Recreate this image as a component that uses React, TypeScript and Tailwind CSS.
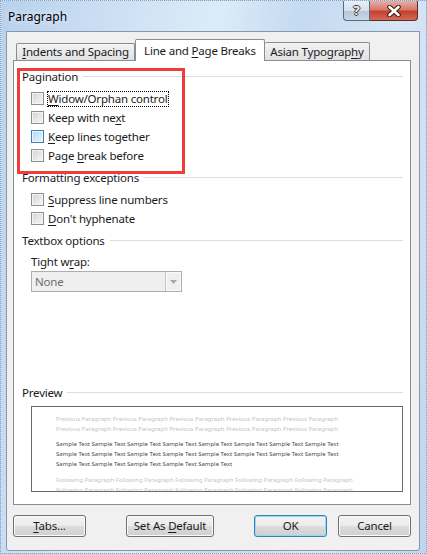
import React from "react";

const U = ({ children }: { children: React.ReactNode }) => (
  <span className="underline decoration-1 underline-offset-[2px]">{children}</span>
);

function Checkbox({ hot }: { hot?: boolean }) {
  return (
    <div
      className={`w-[13px] h-[13px] shrink-0 border p-px bg-[#f4f4f4] ${
        hot ? "border-[#3c7fb1] bg-[#def1fd]" : "border-[#8e8f8f]"
      }`}
    >
      <div
        className={`w-full h-full ${
          hot
            ? "bg-linear-to-br from-[#b0daf7] to-[#e8f5fe]"
            : "bg-linear-to-br from-[#d6d6d6] to-[#f4f4f4]"
        }`}
      />
    </div>
  );
}

function CheckRow({
  children,
  hot,
  focus,
}: {
  children: React.ReactNode;
  hot?: boolean;
  focus?: boolean;
}) {
  return (
    <div className="flex items-center h-[19px] pl-[9px]">
      <Checkbox hot={hot} />
      <span
        className={`ml-[3px] pr-px leading-[14px] border whitespace-nowrap ${
          focus ? "border-dotted border-black" : "border-transparent"
        }`}
      >
        {children}
      </span>
    </div>
  );
}

function GroupHeader({ title, className = "" }: { title: string; className?: string }) {
  return (
    <div className={`flex items-center h-[16px] ${className}`}>
      <span className="text-[#1a1a1a] whitespace-nowrap">{title}</span>
      <div className="flex-1 h-px bg-[#d5dfe6] ml-[5px] mt-[-2px]" />
    </div>
  );
}

function Button({
  children,
  className = "",
  primary,
}: {
  children: React.ReactNode;
  className?: string;
  primary?: boolean;
}) {
  return (
    <div
      className={`h-[22px] rounded-[3px] border flex items-center justify-center text-[#1a1a1a] bg-[linear-gradient(#f2f2f2_0%,#ebebeb_50%,#dddddd_50%,#cfcfcf_100%)] ${
        primary
          ? "border-[#3c7fb1] shadow-[inset_0_0_0_1px_#8fdcf8]"
          : "border-[#707070] shadow-[inset_0_0_0_1px_#fbfbfb]"
      } ${className}`}
    >
      {children}
    </div>
  );
}

const prevLine = "Previous Paragraph Previous Paragraph Previous Paragraph Previous Paragraph Previous Paragraph";
const sample8 = "Sample Text Sample Text Sample Text Sample Text Sample Text Sample Text Sample Text Sample Text";
const sample5 = "Sample Text Sample Text Sample Text Sample Text Sample Text";
const follLine = "Following Paragraph Following Paragraph Following Paragraph Following Paragraph Following Paragraph";

export default function App() {
  return (
    <div className="relative w-[427px] h-[554px] overflow-hidden border border-dotted border-[#8aa0bd] bg-[linear-gradient(100deg,#b8d1ec_0%,#cfe2f5_25%,#dcebf8_42%,#c4daf0_58%,#d6e6f6_78%,#bfd5ed_100%)] font-['Noto_Sans',sans-serif] text-[11.5px] tracking-[-0.2px] flex flex-col">
      {/* Title bar */}
      <div className="h-[30px] flex justify-between pl-[7px] pr-[8px] shrink-0">
        <span className="self-center mt-[1px] text-[12px] tracking-normal text-black [text-shadow:0_0_6px_#ffffff]">
          Paragraph
        </span>
        <div className="flex self-start h-[20px]">
          <div className="w-[27px] h-[20px] rounded-bl-[4px] border border-t-0 border-[#5b6b7e] bg-[linear-gradient(#e9f0f7_0%,#d3dfeb_50%,#b7c7d9_51%,#c9d7e6_100%)] flex items-center justify-center">
            <span className="text-[13px] font-bold leading-none text-[#f4f4f4] [text-shadow:1px_0_#3a3a3a,-1px_0_#3a3a3a,0_1px_#3a3a3a,0_-1px_#3a3a3a]">
              ?
            </span>
          </div>
          <div className="w-[48px] h-[20px] rounded-br-[4px] border border-t-0 border-l-0 border-[#5e2a24] bg-[linear-gradient(#e9aea4_0%,#d8796b_45%,#c2402f_55%,#d56a59_100%)] flex items-center justify-center">
            <svg width="16" height="12" viewBox="0 0 16 12">
              <path d="M3.5 2 L12.5 10 M12.5 2 L3.5 10" stroke="#3a1b16" strokeWidth="4.6" strokeLinecap="round" fill="none" />
              <path d="M3.5 2 L12.5 10 M12.5 2 L3.5 10" stroke="#ffffff" strokeWidth="2.6" strokeLinecap="round" fill="none" />
            </svg>
          </div>
        </div>
      </div>

      {/* Client area */}
      <div className="ml-[5px] w-[414px] h-[520px] border border-[#8796a8] rounded-b-[3px] bg-[#f0f0f0] flex flex-col pt-[7px] pl-[6px] pr-[8px] shrink-0">
        {/* Tabs */}
        <div className="relative z-10 h-[22px] -mb-px flex items-end">
          <div className="ml-[3px] mb-px w-[119px] h-[17px] border border-b-0 border-[#898c95] rounded-t-[2px] bg-linear-to-b from-[#f3f3f3] to-[#e1e1e1] flex items-center justify-center whitespace-nowrap text-[#1a1a1a]">
            <span><U>I</U>ndents and Spacing</span>
          </div>
          <div className="w-[130px] h-[22px] border border-b-0 border-[#898c95] rounded-t-[2px] bg-white flex items-start justify-center pt-[2px] whitespace-nowrap text-[#1a1a1a]">
            <span>Line and <U>P</U>age Breaks</span>
          </div>
          <div className="mb-px w-[105px] h-[18px] border border-b-0 border-l-0 border-[#898c95] rounded-t-[2px] bg-linear-to-b from-[#f3f3f3] to-[#e1e1e1] flex items-center justify-center whitespace-nowrap text-[#1a1a1a]">
            <span>Asian Typograp<U>h</U>y</span>
          </div>
        </div>

        {/* Tab page */}
        <div className="h-[445px] border border-[#898c95] bg-white flex flex-col pt-[8px] pl-[8px] pr-[7px] text-[#1a1a1a]">
          <GroupHeader title="Pagination" />
          <div className="mt-[4px] flex flex-col">
            <CheckRow focus>
              <U>W</U>idow/Orphan control
            </CheckRow>
            <CheckRow>
              Keep with ne<U>x</U>t
            </CheckRow>
            <CheckRow hot>
              <U>K</U>eep lines together
            </CheckRow>
            <CheckRow>
              Page <U>b</U>reak before
            </CheckRow>
          </div>

          <GroupHeader title="Formatting exceptions" className="mt-[5px]" />
          <div className="mt-[4px] flex flex-col">
            <CheckRow>
              <U>S</U>uppress line numbers
            </CheckRow>
            <CheckRow>
              <U>D</U>on&apos;t hyphenate
            </CheckRow>
          </div>

          <GroupHeader title="Textbox options" className="mt-[5px]" />
          <div className="mt-[5px] pl-[9px] h-[16px] flex items-center">
            <span>
              Tight w<U>r</U>ap:
            </span>
          </div>
          <div className="ml-[9px] mt-[1px] w-[151px] h-[21px] border border-[#adadad] bg-[#efefef] flex">
            <span className="flex-1 pl-[3px] leading-[19px] text-[#6d6d6d]">None</span>
            <div className="w-[16px] h-full border-l border-[#c6c6c6] shadow-[inset_0_0_0_1px_#fafafa] flex items-center justify-center">
              <svg width="7" height="4" viewBox="0 0 7 4">
                <path d="M0 0 H7 L3.5 4 Z" fill="#a6a6a6" />
              </svg>
            </div>
          </div>

          <GroupHeader title="Preview" className="mt-[93px]" />
          <div className="ml-[9px] mt-[5px] h-[86px] border border-[#6a6a6a] overflow-hidden bg-white pl-[24px] pt-[7px] font-['Noto_Sans',sans-serif] text-[6px] tracking-normal leading-[10px] whitespace-nowrap">
            <div className="text-[#c4c4c4]">{prevLine}</div>
            <div className="text-[#c4c4c4]">{prevLine}</div>
            <div className="mt-[5px] text-[#4a4a4a]">{sample8}</div>
            <div className="text-[#4a4a4a]">{sample8}</div>
            <div className="text-[#4a4a4a]">{sample5}</div>
            <div className="mt-[6px] text-[#c4c4c4]">{follLine}</div>
            <div className="text-[#c4c4c4]">{follLine}</div>
          </div>
        </div>

        {/* Buttons */}
        <div className="mt-[10px] flex">
          <Button className="w-[73px]">
            <span>
              <U>T</U>abs...
            </span>
          </Button>
          <Button className="ml-[40px] w-[88px]">
            <span>
              Set As <U>D</U>efault
            </span>
          </Button>
          <Button primary className="ml-auto w-[73px]">
            OK
          </Button>
          <Button className="ml-[11px] w-[73px]">Cancel</Button>
        </div>
      </div>

      {/* Red annotation box */}
      <div className="absolute left-[16px] top-[67px] w-[168px] h-[106px] border-[3px] border-[#f23b3b] pointer-events-none" />
    </div>
  );
}
